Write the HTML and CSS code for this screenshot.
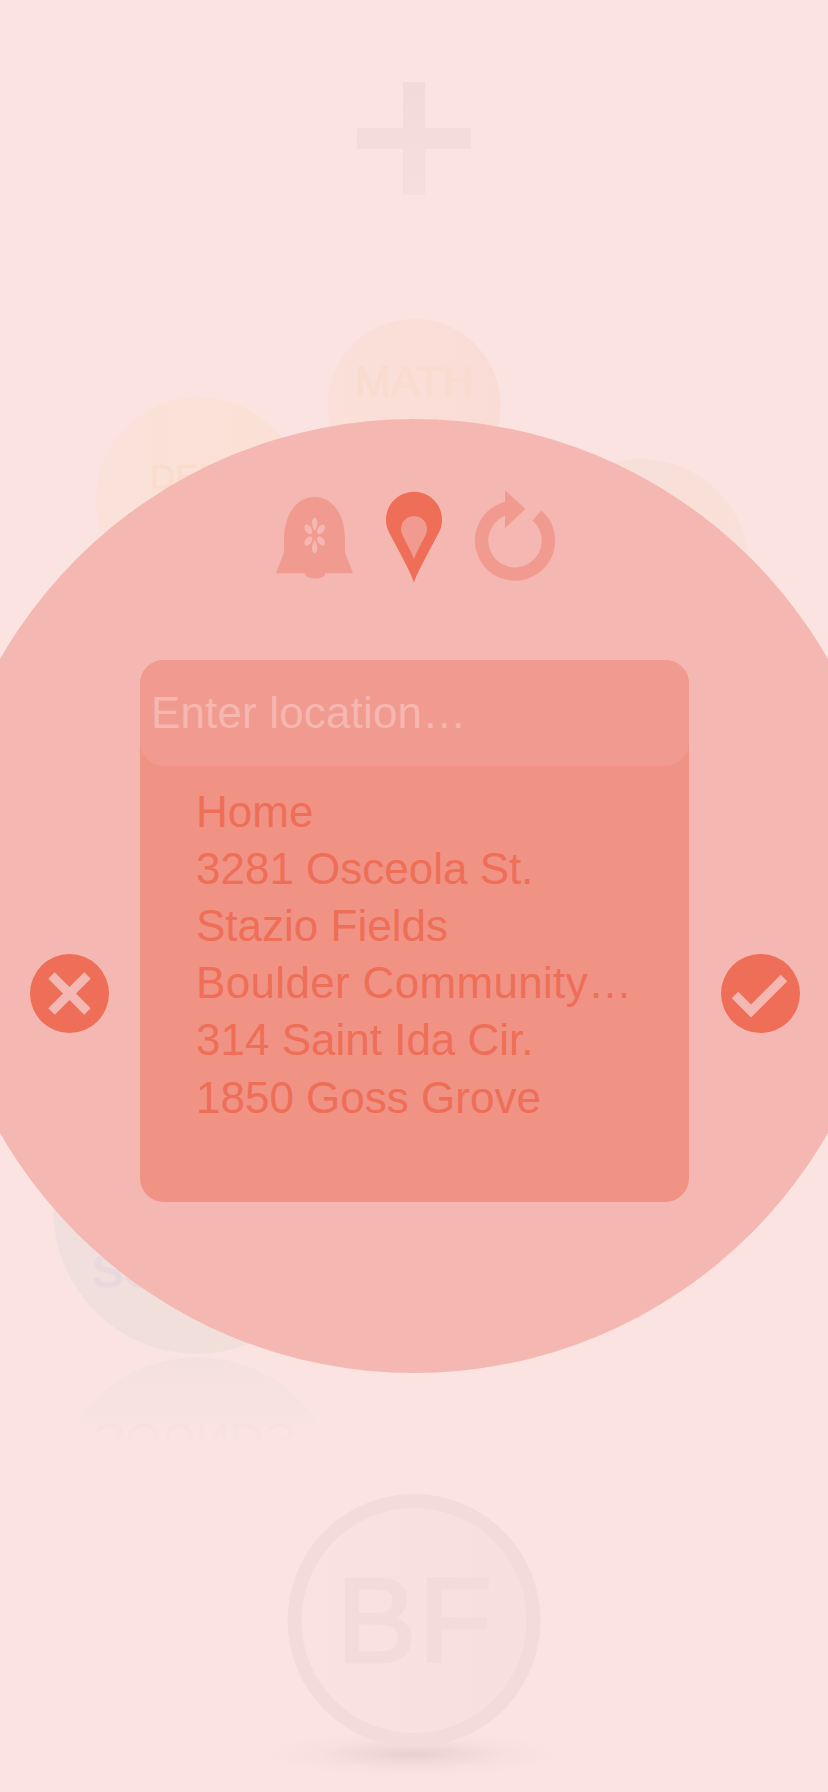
FILE: index.html
```html
<!DOCTYPE html>
<html lang="en">
<head>
<meta charset="utf-8">
<title>Choose location</title>
<link rel="stylesheet" href="styles.css">
</head>
<body>
<div class="screen">
  <svg class="canvas" viewBox="0 0 828 1792" aria-hidden="true">
    <defs>
      <linearGradient id="plus" x1="0" y1="0" x2="0" y2="1"><stop offset="0" stop-color="#f2dada"/><stop offset="1" stop-color="#f6dedd"/></linearGradient>
      <linearGradient id="coin" x1="0" x2="1"><stop offset="0" stop-color="#f9e2e1"/><stop offset="1" stop-color="#f6dfde"/></linearGradient>
      <linearGradient id="math" x1="0" x2="1"><stop offset="0" stop-color="#fbe0da"/><stop offset="1" stop-color="#f9dcd5"/></linearGradient>
      <linearGradient id="gold" x1="0" x2="1"><stop offset="0" stop-color="#fae2da"/><stop offset="1" stop-color="#fce0d5"/></linearGradient>
      <linearGradient id="sand" x1="0" x2="1"><stop offset="0" stop-color="#f6dfd8"/><stop offset="1" stop-color="#f9e1da"/></linearGradient>
      <linearGradient id="mist" x1="0" x2="1"><stop offset="0" stop-color="#f0dfde"/><stop offset="1" stop-color="#f3dfd8"/></linearGradient>
      <linearGradient id="mirror" x1="0" y1="1355" x2="0" y2="1432" gradientUnits="userSpaceOnUse"><stop offset="0" stop-color="#f4e1df"/><stop offset="1" stop-color="#fae3e1"/></linearGradient>
      <linearGradient id="echo" x1="0" y1="1287" x2="0" y2="1264" gradientUnits="userSpaceOnUse"><stop offset="0" stop-color="#f7e0df"/><stop offset="1" stop-color="#fae3e1"/></linearGradient>
      <radialGradient id="shade"><stop offset="0" stop-color="#e8d0cf"/><stop offset=".35" stop-color="#f0d9d8"/><stop offset=".65" stop-color="#f7e0de"/><stop offset="1" stop-color="#fae3e1"/></radialGradient>
    </defs>
    <path d="M403 82h22v46h46v21h-46v46h-22v-46h-46v-21h46z" fill="url(#plus)"/>
    <circle cx="414" cy="405.5" r="86.5" fill="url(#math)"/>
    <text class="math" x="414.500" y="396">MATH</text>
    <path d="M382 418h6M410 418h5M421 418h4M433 418h4M444 418h5" stroke="#f9dbcf" stroke-width="2"/>
    <circle cx="199" cy="500" r="103" fill="url(#gold)"/>
    <text class="debt" x="150" y="489">DEBT</text>
    <circle cx="641" cy="567" r="108" fill="url(#sand)"/>
    <circle cx="197" cy="1210" r="143.7" fill="url(#mist)"/>
    <text class="sounds" x="92" y="1287">SOUNDS</text>
    <path d="M72 1430A143.7 143.7 0 0 1 322 1430z" fill="url(#mirror)"/>
    <text class="sounds echo" x="94" y="1287" transform="matrix(1 0 0 -1 0 2711)">SOUNDS</text>
    <ellipse cx="413" cy="1754" rx="148" ry="23" fill="url(#shade)"/>
    <circle cx="414" cy="1620.5" r="119.5" fill="url(#coin)" stroke="#f3dbda" stroke-width="14"/>
    <text class="initials" x="336.500" y="1662">BF</text>
  </svg>

  <main class="dial">
    <nav class="modes">
      <svg class="mode-bell" viewBox="48 60 231 273">
        <path class="soft" d="M72 247V210C72 130 112 81 164 81S255 130 255 210V247L279 310H196C196 331 135 331 135 310H48z"/>
        <g class="petals">
          <path d="M164 183C158 174 156 165 156 158C156 138 172 138 172 158C172 165 170 174 164 183z"/>
          <path d="M164 209C158 218 156 227 156 234C156 254 172 254 172 234C172 227 170 218 164 209z"/>
          <ellipse cx="145" cy="178" rx="9.500" ry="16" transform="rotate(-35 145 178)"/>
          <ellipse cx="183" cy="178" rx="9.500" ry="16" transform="rotate(35 183 178)"/>
          <ellipse cx="145" cy="213" rx="9.500" ry="16" transform="rotate(35 145 213)"/>
          <ellipse cx="183" cy="213" rx="9.500" ry="16" transform="rotate(-35 183 213)"/>
        </g>
      </svg>
      <svg class="mode-pin" viewBox="378 60 168 273">
        <path class="strong" d="M462 338C452 308 438 284 387 187A84 84 0 1 1 537 187C486 284 472 308 462 338z"/>
        <path class="soft" d="M462 267C457 252 450 240 427 194A39 39 0 1 1 497 194C474 240 467 252 462 267z"/>
      </svg>
      <svg class="mode-repeat" viewBox="645 60 240 273">
        <path class="ring" d="M830.600 136.500A100 100 0 1 1 745 114"/>
        <path class="soft" d="M735 60L796 117L735 174z"/>
      </svg>
    </nav>
    <div class="chooser">
      <button class="round" aria-label="Cancel"><svg viewBox="0 0 79 79"><path d="M21.500 21.500L57.500 57.500M57.500 21.500L21.500 57.500"/></svg></button>
      <section class="panel">
        <div class="field"><span class="placeholder">Enter location…</span></div>
        <ul class="places">
          <li>Home</li>
          <li>3281 Osceola St.</li>
          <li>Stazio Fields</li>
          <li class="long">Boulder Community…</li>
          <li>314 Saint Ida Cir.</li>
          <li>1850 Goss Grove</li>
        </ul>
      </section>
      <button class="round" aria-label="Confirm"><svg viewBox="0 0 79 79"><path d="M14 41L30 57L63 24"/></svg></button>
    </div>
  </main>
</div>
</body>
</html>
```
FILE: styles.css
```css
body { margin: 0; background: #fae3e1; font-family: "Liberation Sans", Arial, sans-serif; }
.screen { position: relative; width: 828px; height: 1792px; overflow: hidden; }
.canvas { display: block; width: 828px; height: 1792px; }
.math { font-size: 43px; text-anchor: middle; fill: #f9dbcf; stroke: #f9dbcf; }
.debt { font-size: 35px; fill: #fbdccb; stroke: #fbdccb; stroke-width: .7px; }
.sounds { font-size: 47px; fill: #e9d8dd; stroke: #e9d8dd; stroke-width: 1.500px; }
.echo { fill: url(#echo); stroke: none; }
.initials { font-size: 120px; letter-spacing: 2px; fill: #f3dbda; stroke: #f3dbda; stroke-width: 3px; }
.dial {
  position: absolute; left: -63px; top: 419px; width: 954px; height: 954px;
  box-sizing: border-box; padding-top: 71px; border-radius: 50%; background: #f5b7b1;
  display: flex; flex-direction: column; align-items: center; gap: 79px;
}
.modes { display: flex; gap: 33px; height: 91px; padding-left: 3px; }
.modes svg { height: 91px; overflow: visible; }
.mode-bell { width: 77px; }
.mode-pin { width: 56px; }
.mode-repeat { width: 80px; }
.soft { fill: #f19b90; }
.strong { fill: #ee6e57; }
.petals { fill: #f5b7b1; }
.ring { fill: none; stroke: #f19b90; stroke-width: 40; }
.chooser { display: flex; align-items: flex-start; gap: 31.500px; padding-left: 1px; }
.round { flex: none; width: 79px; height: 79px; margin: 294px 0 0; padding: 0; border: 0; border-radius: 50%; background: #ee6e57; }
.round svg { display: block; width: 79px; height: 79px; fill: none; stroke: #f5b7b1; stroke-width: 9.200; }
.panel { width: 549px; height: 542px; border-radius: 24px; background: #f09385; }
.field { box-sizing: border-box; height: 106px; padding: 26px 11px; border-radius: 24px; background: #f19b90; }
.placeholder { font-size: 44px; line-height: 53px; letter-spacing: .15px; color: #f5b7b0; white-space: nowrap; }
.places { margin: 0; padding: 16.500px 0 0 56px; list-style: none; font-size: 44px; line-height: 57.200px; color: #ee6e57; white-space: nowrap; }
.long { letter-spacing: .33px; }
```
